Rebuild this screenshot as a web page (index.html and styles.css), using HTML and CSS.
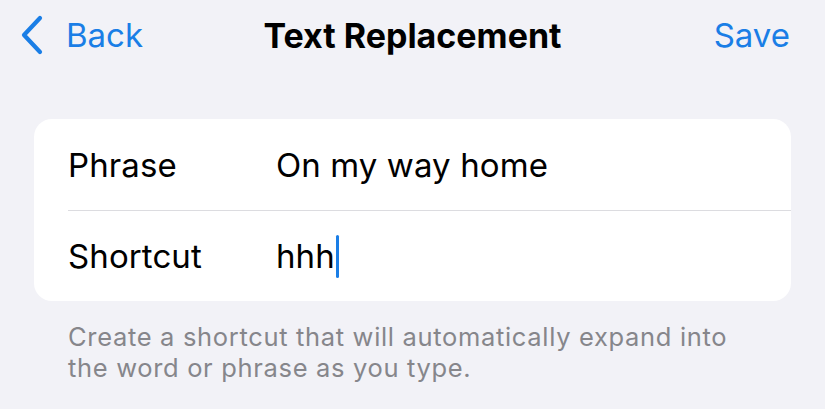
FILE: index.html
```html
<!DOCTYPE html>
<html lang="en">
<head>
<meta charset="utf-8">
<title>Text Replacement</title>
<link rel="stylesheet" href="styles.css">
</head>
<body>
  <header class="navbar">
    <a class="nav-back" href="#">
      <svg class="chevron" viewBox="0 0 24 40" width="24" height="40" aria-hidden="true">
        <path d="M20 3 L4 20 L20 37" fill="none" stroke="currentColor" stroke-width="4.2" stroke-linecap="round" stroke-linejoin="round"/>
      </svg>
      <span>Back</span>
    </a>
    <h1 class="nav-title">Text Replacement</h1>
    <a class="nav-action" href="#">Save</a>
  </header>

  <main class="content">
    <section class="group">
      <div class="row">
        <span class="row-label">Phrase</span>
        <span class="row-value">On my way home</span>
      </div>
      <div class="row">
        <span class="row-label">Shortcut</span>
        <span class="row-value">hhh<span class="caret"></span></span>
      </div>
    </section>
    <p class="footnote">Create a shortcut that will automatically expand into the word or phrase as you type.</p>
  </main>
</body>
</html>
```

FILE: styles.css
```css
* {
  box-sizing: border-box;
}

html, body {
  margin: 0;
  padding: 0;
}

body {
  width: 825px;
  height: 409px;
  overflow: hidden;
  background: #f2f2f7;
  font-family: Inter, "Noto Sans", "Liberation Sans", sans-serif;
  color: #000;
}

.navbar {
  position: relative;
  display: flex;
  align-items: center;
  justify-content: space-between;
  height: 70px;
  padding: 0 35px 0 20px;
}

.nav-back,
.nav-action {
  display: flex;
  align-items: center;
  color: #1a7ee6;
  text-decoration: none;
  font-size: 33px;
}

.chevron {
  display: block;
  margin-right: 22px;
  margin-top: -1px;
}

.nav-title {
  position: absolute;
  left: 0;
  right: 0;
  text-align: center;
  margin: 0;
  font-size: 34px;
  font-weight: 700;
  pointer-events: none;
}

.content {
  padding: 49px 34px 0 34px;
}

.group {
  background: #fff;
  border-radius: 18px;
  overflow: hidden;
}

.row {
  display: flex;
  align-items: center;
  height: 91px;
  margin-left: 34px;
  font-size: 33px;
  letter-spacing: 0.1px;
}

.row + .row {
  border-top: 1.5px solid #dcdce0;
}

.row-label {
  width: 208px;
  flex: none;
}

.row-value {
  display: flex;
  align-items: center;
}

.caret {
  display: inline-block;
  width: 3px;
  height: 43px;
  margin-left: 1px;
  border-radius: 2px;
  background: #1a7ee6;
}

.footnote {
  margin: 20px 60px 0 34px;
  font-size: 25.5px;
  line-height: 31px;
  color: #86868b;
  letter-spacing: 0.67px;
}
```
